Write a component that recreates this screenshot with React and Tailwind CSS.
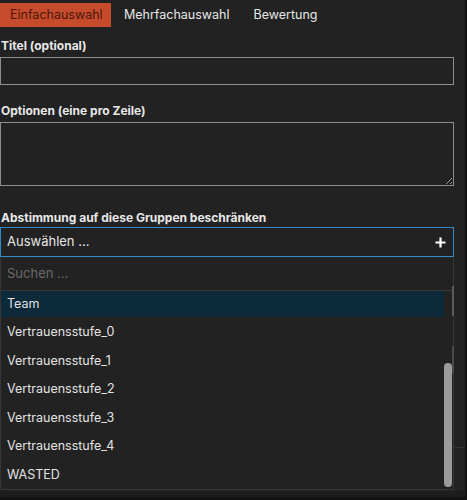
import React from "react";

const items = [
  "Team",
  "Vertrauensstufe_0",
  "Vertrauensstufe_1",
  "Vertrauensstufe_2",
  "Vertrauensstufe_3",
  "Vertrauensstufe_4",
  "WASTED",
];

export default function App() {
  return (
    <div
      className="w-[467px] h-[500px] bg-[#121212] flex overflow-hidden text-[12.5px] text-[#dddddd]"
      style={{ fontFamily: "Inter, 'Noto Sans', sans-serif" }}
    >
      <div className="w-[465px] h-full bg-[#222222] flex flex-col relative">
        <div className="flex pt-[3px] h-[27px]">
          <div className="h-[24px] px-[10px] w-[111px] bg-[#c54b2c] text-[#4e170b] flex items-center">
            Einfachauswahl
          </div>
          <div className="h-[24px] pl-[13px] pr-[12px] flex items-center text-[#e6e6e6]">
            Mehrfachauswahl
          </div>
          <div className="h-[24px] pl-[12px] flex items-center text-[#e6e6e6]">
            Bewertung
          </div>
        </div>

        <div className="w-[454px] flex flex-col">
          <div className="mt-[11px] h-[16px] font-bold text-[12px] text-[#e8e8e8] flex items-center pl-[1px]">
            Titel (optional)
          </div>
          <div className="mt-[3px] h-[28px] border border-[#8c8c8c] bg-[#222222]"></div>

          <div className="mt-[18px] h-[16px] font-bold text-[12px] text-[#e8e8e8] flex items-center pl-[1px]">
            Optionen (eine pro Zeile)
          </div>
          <textarea className="mt-[3px] h-[64px] border border-[#8c8c8c] bg-[#222222] resize-y outline-none block"></textarea>

          <div className="mt-[24px] h-[16px] font-bold text-[12px] text-[#e8e8e8] flex items-center pl-[1px]">
            Abstimmung auf diese Gruppen beschränken
          </div>
          <div className="mt-[1px] h-[30px] border border-[#2e8bc9] bg-[#222222] flex items-center justify-between pl-[6px] pr-[7px]">
            <span className="text-[#e6e6e6] text-[13px]">Auswählen ...</span>
            <svg width="11" height="11" viewBox="0 0 11 11">
              <path d="M5.5 0.5v10M0.5 5.5h10" stroke="#ffffff" strokeWidth="2.2" />
            </svg>
          </div>

          <div className="h-[233px] border border-[#363636] border-t-[#2a2a2a] bg-[#222222] flex flex-col relative overflow-hidden">
            <div className="h-[33px] shrink-0 border-b border-[#3a3a3a] flex items-center pl-[6px] text-[#6a6a6a] text-[13px]">
              Suchen ...
            </div>
            <div className="flex flex-col">
              {items.map((it, i) => (
                <div key={it} className="h-[28.5px] shrink-0 flex items-start">
                  <div
                    className={
                      "h-[26px] w-[443px] flex items-center pl-[6px] text-[#e2e2e2] " +
                      (i === 0 ? "bg-[#0c2a3a]" : "")
                    }
                  >
                    {it}
                  </div>
                </div>
              ))}
            </div>
            <div className="absolute right-[1px] top-[105px] w-[8px] h-[124px] rounded-full bg-[#9b9b9b]"></div>
          </div>
        </div>

        <div className="absolute left-[452px] top-[286px] w-[2px] h-[30px] bg-[#5a5a5a]"></div>
        <div className="absolute left-[452px] top-[346px] w-[2px] h-[27px] bg-[#4a4a4a]"></div>
        <div className="absolute left-[454px] top-[447px] w-[11px] h-[1px] bg-[#333333]"></div>

        <div className="flex-1 bg-[#1d1d1d] mt-[1px] border-b-[3px] border-[#121212]"></div>
      </div>
    </div>
  );
}
